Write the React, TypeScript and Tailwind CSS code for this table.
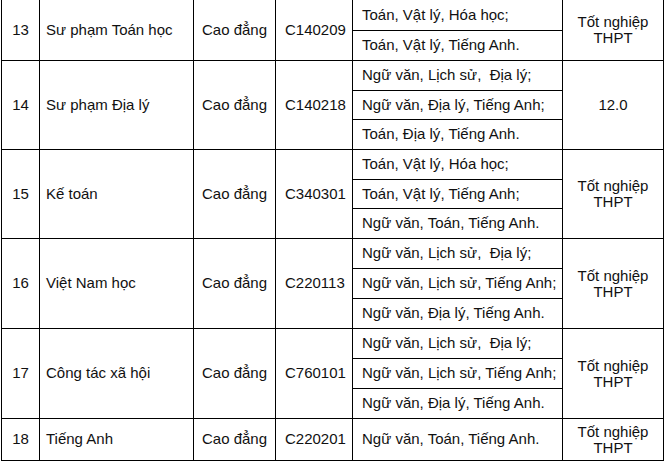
type Row = {
  no: string;
  name: string;
  code: string;
  subjects: string[];
  score: string[];
  height: string;
};

const rows: Row[] = [
  {
    no: '13',
    name: 'Sư phạm Toán học',
    code: 'C140209',
    subjects: ['Toán, Vật lý, Hóa học;', 'Toán, Vật lý, Tiếng Anh.'],
    score: ['Tốt nghiệp', 'THPT'],
    height: 'h-[61px]',
  },
  {
    no: '14',
    name: 'Sư phạm Địa lý',
    code: 'C140218',
    subjects: ['Ngữ văn, Lịch sử,  Địa lý;', 'Ngữ văn, Địa lý, Tiếng Anh;', 'Toán, Địa lý, Tiếng Anh.'],
    score: ['12.0'],
    height: 'h-[89px]',
  },
  {
    no: '15',
    name: 'Kế toán',
    code: 'C340301',
    subjects: ['Toán, Vật lý, Hóa học;', 'Toán, Vật lý, Tiếng Anh;', 'Ngữ văn, Toán, Tiếng Anh.'],
    score: ['Tốt nghiệp', 'THPT'],
    height: 'h-[89px]',
  },
  {
    no: '16',
    name: 'Việt Nam học',
    code: 'C220113',
    subjects: ['Ngữ văn, Lịch sử,  Địa lý;', 'Ngữ văn, Lịch sử, Tiếng Anh;', 'Ngữ văn, Địa lý, Tiếng Anh.'],
    score: ['Tốt nghiệp', 'THPT'],
    height: 'h-[90px]',
  },
  {
    no: '17',
    name: 'Công tác xã hội',
    code: 'C760101',
    subjects: ['Ngữ văn, Lịch sử,  Địa lý;', 'Ngữ văn, Lịch sử, Tiếng Anh;', 'Ngữ văn, Địa lý, Tiếng Anh.'],
    score: ['Tốt nghiệp', 'THPT'],
    height: 'h-[90px]',
  },
  {
    no: '18',
    name: 'Tiếng Anh',
    code: 'C220201',
    subjects: ['Ngữ văn, Toán, Tiếng Anh.'],
    score: ['Tốt nghiệp', 'THPT'],
    height: 'h-[42px]',
  },
];

export default function App() {
  return (
    <div className="h-[461px] w-[665px] overflow-hidden bg-white">
      <div
        className="ml-px w-[663px] border-l border-black text-[15px] text-[#111]"
        style={{ fontFamily: '"Liberation Sans", Arial, sans-serif' }}
      >
        {rows.map((row) => (
          <div key={row.no} className={`flex border-b border-black ${row.height}`}>
            <div className="flex w-[38px] shrink-0 items-center justify-center border-r border-black">{row.no}</div>
            <div className="flex w-[154px] shrink-0 items-center border-r border-black pl-[6px]">{row.name}</div>
            <div className="flex w-[82px] shrink-0 items-center justify-center border-r border-black">Cao đẳng</div>
            <div className="flex w-[77px] shrink-0 items-center border-r border-black pl-[9px]">{row.code}</div>
            <div className="flex w-[210px] shrink-0 flex-col border-r border-black">
              {row.subjects.map((s, i) => (
                <div
                  key={i}
                  className={`flex flex-1 items-center whitespace-pre pl-[9px] ${i < row.subjects.length - 1 ? 'border-b border-black' : ''}`}
                >
                  {s}
                </div>
              ))}
            </div>
            <div className="flex w-[101px] shrink-0 flex-col items-center justify-center border-r border-black leading-[16px]">
              {row.score.map((line) => (
                <span key={line}>{line}</span>
              ))}
            </div>
          </div>
        ))}
      </div>
    </div>
  );
}
